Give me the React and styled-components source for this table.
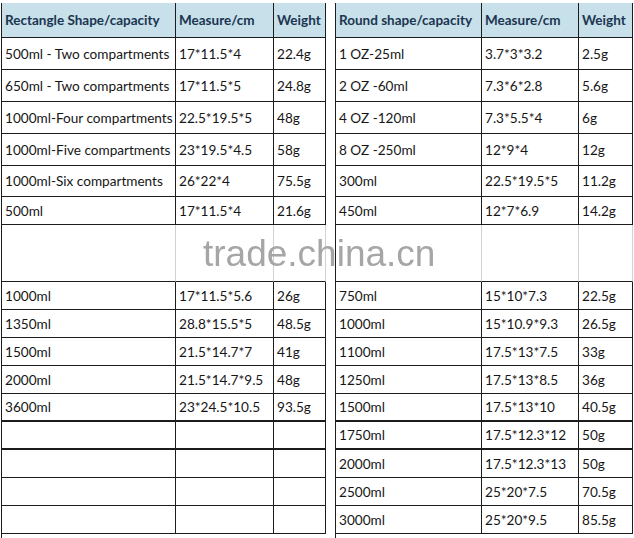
import React from "react";
import styled, { createGlobalStyle } from "styled-components";

const Global = createGlobalStyle`
  html, body { margin: 0; padding: 0; background: #fff; }
  body { font-family: Lato, "Open Sans", sans-serif; }
  * { box-sizing: border-box; }
`;

const Sheet = styled.div`
  position: relative;
  display: flex;
  gap: 9px;
  padding: 3px 0 0 1px;
  width: 634px;
  height: 538px;
  overflow: hidden;
`;

const Table = styled.div`
  display: grid;
  grid-template-columns: ${(p) => p.$cols};
  border-left: 1px solid #1c1c1c;
  align-content: start;
`;

const Cell = styled.div`
  height: ${(p) => p.$h}px;
  display: flex;
  align-items: center;
  padding-left: 3px;
  white-space: nowrap;
  overflow: hidden;
  font-size: 13.6px;
  color: #161616;
  border-right: 1px solid ${(p) => (p.$faint ? "#d2d2d2" : "#1c1c1c")};
  border-bottom: ${(p) => (p.$thick ? 2 : 1)}px solid #1c1c1c;
`;

const HeadCell = styled(Cell)`
  background: #c7e0ea;
  font-weight: 700;
  font-size: 13.5px;
  color: #1b3550;
  border-bottom-color: #1c1c1c;
`;

const Watermark = styled.div`
  position: absolute;
  left: 203px;
  top: 233px;
  font-family: "Liberation Sans", Arial, sans-serif;
  font-size: 37px;
  color: #a6a6a6;
  filter: blur(0.4px);
  pointer-events: none;
`;

const heights = [32, 32, 32, 32, 31, 28, 57, 28, 28, 28, 28, 28, 28, 28, 28, 28];

const leftRows = [
  ["500ml - Two compartments", "17*11.5*4", "22.4g"],
  ["650ml - Two compartments", "17*11.5*5", "24.8g"],
  ["1000ml-Four compartments", "22.5*19.5*5", "48g"],
  ["1000ml-Five compartments", "23*19.5*4.5", "58g"],
  ["1000ml-Six compartments", "26*22*4", "75.5g"],
  ["500ml", "17*11.5*4", "21.6g"],
  ["", "", ""],
  ["1000ml", "17*11.5*5.6", "26g"],
  ["1350ml", "28.8*15.5*5", "48.5g"],
  ["1500ml", "21.5*14.7*7", "41g"],
  ["2000ml", "21.5*14.7*9.5", "48g"],
  ["3600ml", "23*24.5*10.5", "93.5g"],
  ["", "", ""],
  ["", "", ""],
  ["", "", ""],
  ["", "", ""],
];

const rightRows = [
  ["1 OZ-25ml", "3.7*3*3.2", "2.5g"],
  ["2 OZ -60ml", "7.3*6*2.8", "5.6g"],
  ["4 OZ -120ml", "7.3*5.5*4", "6g"],
  ["8 OZ -250ml", "12*9*4", "12g"],
  ["300ml", "22.5*19.5*5", "11.2g"],
  ["450ml", "12*7*6.9", "14.2g"],
  ["", "", ""],
  ["750ml", "15*10*7.3", "22.5g"],
  ["1000ml", "15*10.9*9.3", "26.5g"],
  ["1100ml", "17.5*13*7.5", "33g"],
  ["1250ml", "17.5*13*8.5", "36g"],
  ["1500ml", "17.5*13*10", "40.5g"],
  ["1750ml", "17.5*12.3*12", "50g"],
  ["2000ml", "17.5*12.3*13", "50g"],
  ["2500ml", "25*20*7.5", "70.5g"],
  ["3000ml", "25*20*9.5", "85.5g"],
];

function DataTable({ cols, head, rows }) {
  return (
    <Table $cols={cols}>
      {head.map((h) => (
        <HeadCell key={h} $h={35}>
          {h}
        </HeadCell>
      ))}
      {rows.map((r, i) =>
        r.map((c, j) => (
          <Cell key={`${i}-${j}`} $h={heights[i]} $faint={i === 6} $thick={i >= 11 && i <= 12}>
            {c}
          </Cell>
        ))
      )}
    </Table>
  );
}

export default function App() {
  return (
    <>
      <Global />
      <Sheet>
        <DataTable
          cols="174px 98px 52px"
          head={["Rectangle Shape/capacity", "Measure/cm", "Weight"]}
          rows={leftRows}
        />
        <DataTable
          cols="146px 97px 54px"
          head={["Round shape/capacity", "Measure/cm", "Weight"]}
          rows={rightRows}
        />
        <Watermark>trade.china.cn</Watermark>
      </Sheet>
    </>
  );
}
